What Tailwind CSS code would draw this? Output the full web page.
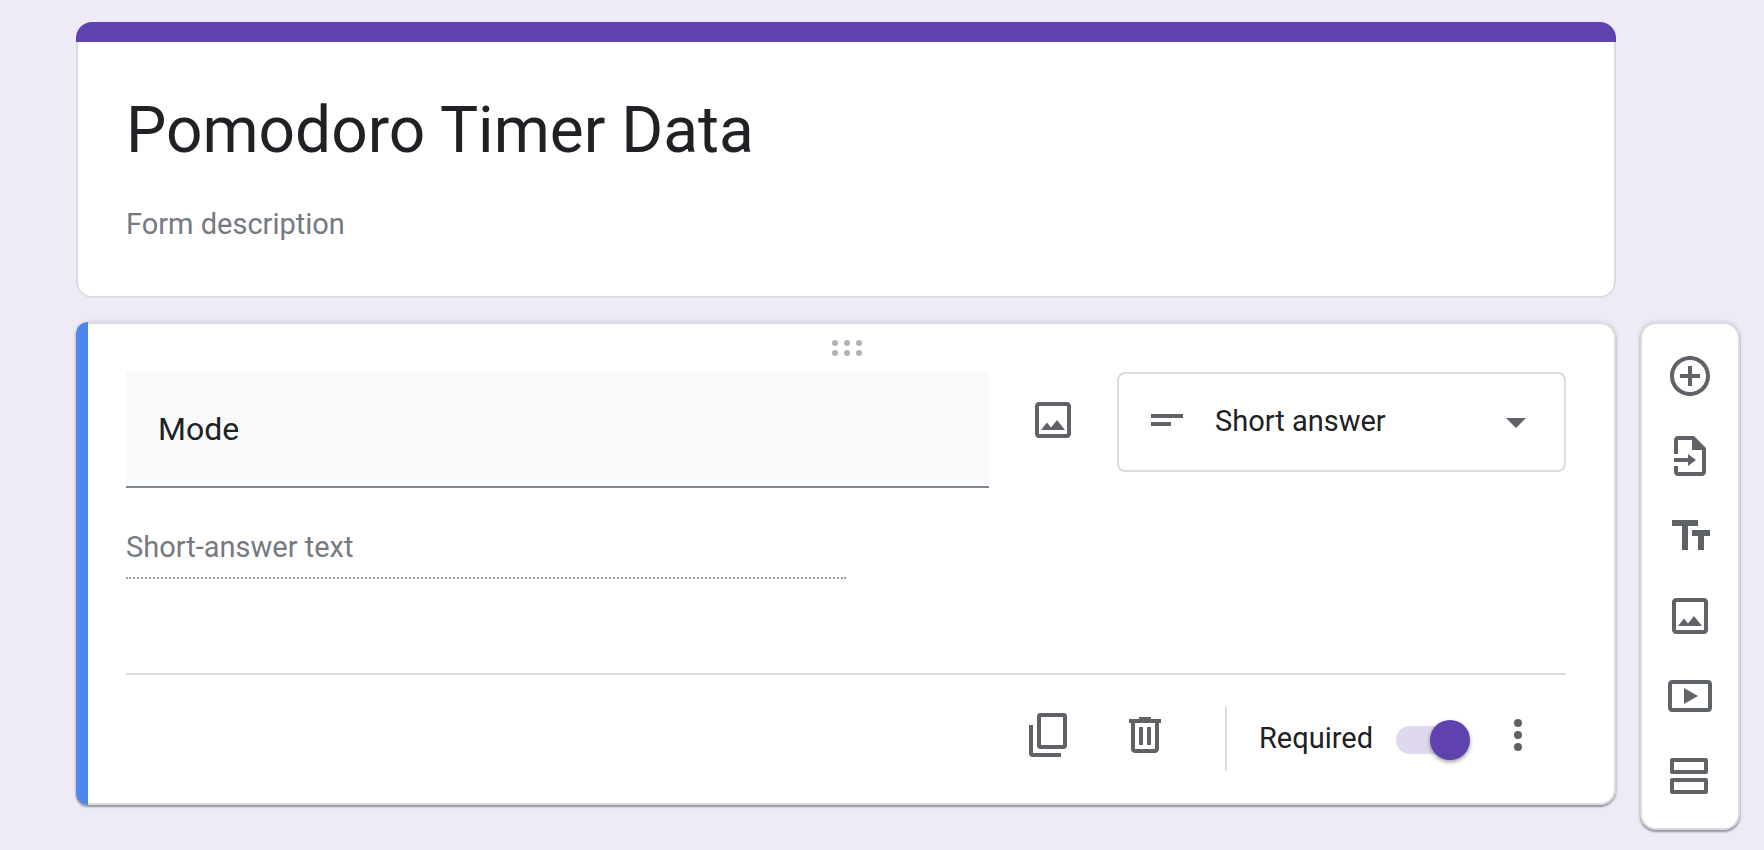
<!DOCTYPE html>
<html lang="en">
<head>
<meta charset="utf-8">
<meta name="viewport" content="width=device-width, initial-scale=1">
<title>Pomodoro Timer Data</title>
<script src="https://cdn.jsdelivr.net/npm/@tailwindcss/browser@4"></script>
</head>
<body class="min-h-screen bg-[#eeebf6] font-['Roboto',sans-serif] text-[#202124]">
<main class="grid grid-cols-[1fr_100px] gap-6 pt-[22px] pr-6 pb-5 pl-[76px]">

  <header class="overflow-hidden rounded-2xl">
    <div class="h-5 bg-[#5f42ae]"></div>
    <div class="rounded-b-2xl border-2 border-t-0 border-[#dadae0] bg-white px-12 pt-[49px] pb-[50px]">
      <input type="text" aria-label="Form title" value="Pomodoro Timer Data" class="block h-20 w-full text-[64px] leading-[80px] outline-none">
      <input type="text" aria-label="Form description" placeholder="Form description" class="mt-[31px] block h-11 w-full text-[29px] leading-[44px] outline-none placeholder:text-[#757980]">
    </div>
  </header>

  <section aria-label="Question" class="col-start-1 flex rounded-l-xl rounded-r-2xl shadow-[0_2px_2px_rgba(0,0,0,0.34),0_0_4px_rgba(60,64,67,0.16)]">
    <div class="w-3 shrink-0 rounded-l-xl bg-[#4f86ec]"></div>
    <div class="min-w-0 flex-1 rounded-r-2xl border-2 border-l-0 border-[#dadae0] bg-white pr-12 pl-[38px]">
      <div class="flex h-12 items-center justify-center pl-0.5">
        <button type="button" aria-label="Move question" class="block">
          <svg class="h-4 w-[30px]" viewBox="0 0 30 16" fill="#b2b2b2"><circle cx="3" cy="3" r="3"/><circle cx="15" cy="3" r="3"/><circle cx="27" cy="3" r="3"/><circle cx="3" cy="13" r="3"/><circle cx="15" cy="13" r="3"/><circle cx="27" cy="13" r="3"/></svg>
        </button>
      </div>

      <div class="flex items-start">
        <div class="min-w-0 flex-1 border-b-2 border-[#80868b] pb-0.5">
          <input type="text" aria-label="Question" value="Mode" class="block h-28 w-full bg-[#f8f9fb] px-8 pt-0.5 text-[32px] outline-none">
        </div>
        <button type="button" aria-label="Add image" class="flex h-24 w-32 shrink-0 items-center justify-center">
          <svg class="size-12" viewBox="0 0 24 24" fill="#5f6368"><path d="M19 3H5c-1.1 0-2 .9-2 2v14c0 1.1.9 2 2 2h14c1.1 0 2-.9 2-2V5c0-1.1-.9-2-2-2zm0 16H5V5h14v14zM6 17h12l-4-5-3 3.700-2-2.500z"/></svg>
        </button>
        <div class="relative h-[100px] w-[449px] shrink-0">
          <select aria-label="Question type" class="h-full w-full appearance-none rounded-lg border-2 border-[#dadae0] bg-white pr-16 pl-24 text-[29px] outline-none">
            <option>Short answer</option>
            <option>Paragraph</option>
          </select>
          <svg class="pointer-events-none absolute top-6 left-[26px] size-12" viewBox="0 0 24 24" fill="#5f6368"><path d="M4 9h16v2H4zm0 4h10v2H4z"/></svg>
          <svg class="pointer-events-none absolute top-[26px] right-[26px] size-12" viewBox="0 0 24 24" fill="#5f6368"><path d="M7 10l5 5 5-5z"/></svg>
        </div>
      </div>

      <input type="text" aria-label="Answer" placeholder="Short-answer text" disabled class="mt-10 block h-[51px] w-1/2 border-b-2 border-dotted border-[#9e9e9e] pb-3 text-[29px] placeholder:text-[#757980]">

      <div class="mt-[94px] flex h-[130px] items-center border-t-2 border-[#dadae0]">
        <button type="button" aria-label="Duplicate question" class="mb-2 ml-auto block">
          <svg class="size-12" viewBox="0 0 24 24" fill="#5f6368"><path d="M20.500 1h-12C7.700 1 7 1.700 7 2.500v15c0 .8.700 1.500 1.500 1.500h12c.8 0 1.500-.7 1.500-1.500v-15c0-.8-.7-1.500-1.500-1.500zM20 17H9V3h11v14zM5 7H3v14.500c0 .8.700 1.500 1.500 1.500H19v-2H5V7z"/></svg>
        </button>
        <button type="button" aria-label="Delete question" class="mb-2 ml-[50px] block">
          <svg class="size-12" viewBox="0 0 24 24" fill="#5f6368"><path d="M15 4V3H9v1H4v2h1v13c0 1.100.9 2 2 2h10c1.100 0 2-.9 2-2V6h1V4h-5zm2 15H7V6h10v13zM9 8h2v9H9zm4 0h2v9h-2z"/></svg>
        </button>
        <div class="ml-14 h-16 w-0.5 bg-[#dadae0]"></div>
        <label for="required" class="ml-8 w-[113px] text-[29px] whitespace-nowrap">Required</label>
        <input id="required" type="checkbox" role="switch" checked class="relative mt-0.5 ml-6 h-7 w-[72px] appearance-none rounded-full bg-[#e3def0] before:absolute before:-top-1.5 before:left-0 before:size-10 before:rounded-full before:bg-white before:shadow-[0_2px_4px_rgba(0,0,0,0.4)] checked:bg-[#dfd8ee] checked:before:left-[34px] checked:before:bg-[#5f42ae]">
        <button type="button" aria-label="More options" class="mr-6 mb-2 ml-[26px] block">
          <svg class="size-12" viewBox="0 0 24 24" fill="#5f6368"><circle cx="12" cy="6" r="2"/><circle cx="12" cy="12" r="2"/><circle cx="12" cy="18" r="2"/></svg>
        </button>
      </div>
    </div>
  </section>

  <aside aria-label="Add to form" class="row-start-2 col-start-2 -mb-[25px] flex flex-col rounded-2xl border-2 border-[#dadae0] bg-white py-3 shadow-[0_2px_2px_rgba(0,0,0,0.34),0_0_4px_rgba(60,64,67,0.16)]">
    <button type="button" aria-label="Add question" class="flex h-20 items-center justify-center">
      <svg class="size-12" viewBox="0 0 24 24" fill="#5f6368"><path d="M13 7h-2v4H7v2h4v4h2v-4h4v-2h-4V7zm-1-5C6.480 2 2 6.480 2 12s4.480 10 10 10 10-4.480 10-10S17.520 2 12 2zm0 18c-4.410 0-8-3.590-8-8s3.590-8 8-8 8 3.590 8 8-3.590 8-8 8z"/></svg>
    </button>
    <button type="button" aria-label="Import questions" class="flex h-20 items-center justify-center">
      <svg class="size-12" viewBox="0 0 24 24" fill="#5f6368"><path d="M14 2H6c-1.100 0-2 .9-2 2v7h2V4h7v5h5v11H6v-3H4v3c0 1.100.9 2 2 2h12c1.100 0 2-.9 2-2V8l-6-6z"/><path d="M11 11v2H4v2h7v2l4-3z"/></svg>
    </button>
    <button type="button" aria-label="Add title and description" class="flex h-20 items-center justify-center">
      <svg class="size-12" viewBox="0 0 24 24" fill="#5f6368"><path d="M3 4v3h5v12h3V7h5V4H3zm19 5h-9v3h3v7h3v-7h3V9z"/></svg>
    </button>
    <button type="button" aria-label="Add image" class="flex h-20 items-center justify-center">
      <svg class="size-12" viewBox="0 0 24 24" fill="#5f6368"><path d="M19 3H5c-1.100 0-2 .9-2 2v14c0 1.100.9 2 2 2h14c1.100 0 2-.9 2-2V5c0-1.100-.9-2-2-2zm0 16H5V5h14v14zM6 17h12l-4-5-3 3.700-2-2.500z"/></svg>
    </button>
    <button type="button" aria-label="Add video" class="flex h-20 items-center justify-center">
      <svg class="size-12" viewBox="0 0 24 24" fill="#5f6368"><path d="M21 4H3c-1.100 0-2 .9-2 2v12c0 1.100.9 2 2 2h18c1.100 0 2-.9 2-2V6c0-1.100-.9-2-2-2zm0 14H3V6h18v12zM9 8v8l7-4z"/></svg>
    </button>
    <button type="button" aria-label="Add section" class="flex h-20 items-center justify-center">
      <svg class="size-12" viewBox="0 0 24 24" fill="#5f6368"><path d="M20 3H3c-.55 0-1 .45-1 1v6c0 .55.45 1 1 1h17c.55 0 1-.45 1-1V4c0-.55-.45-1-1-1zm-1 6H4V5h15v4zm1 4H3c-.55 0-1 .45-1 1v6c0 .55.45 1 1 1h17c.55 0 1-.45 1-1v-6c0-.55-.45-1-1-1zm-1 6H4v-4h15v4z"/></svg>
    </button>
  </aside>
</main>
</body>
</html>
